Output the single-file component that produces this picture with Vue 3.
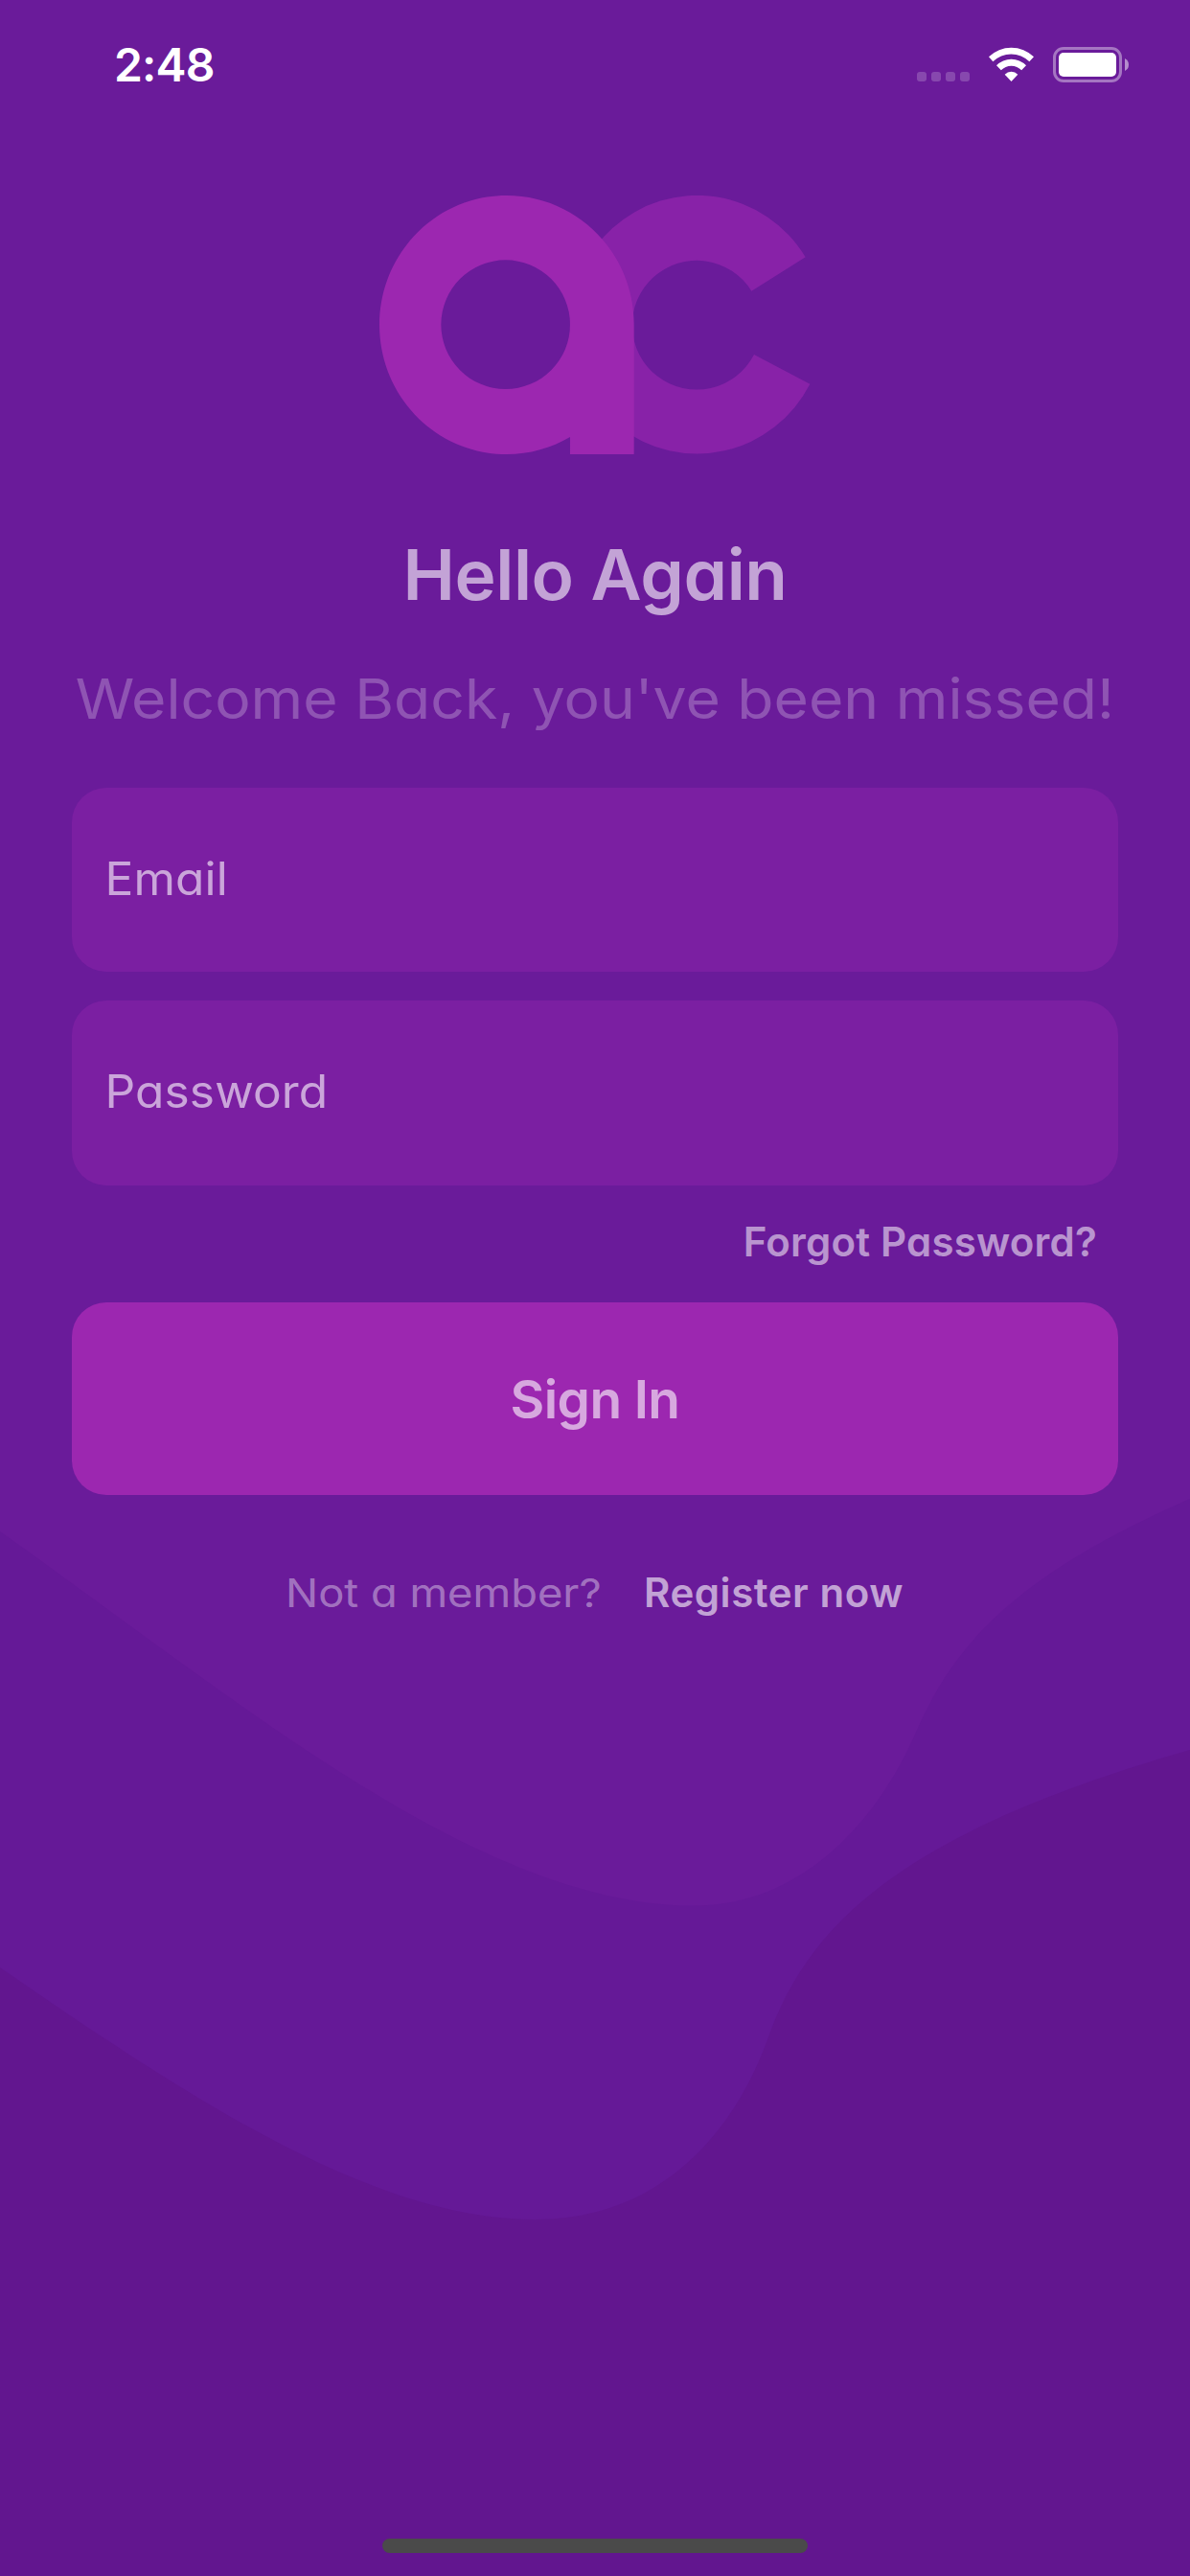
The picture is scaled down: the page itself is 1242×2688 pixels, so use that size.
<script setup>
import { ref } from 'vue'

const email = ref('')
const password = ref('')
</script>

<template>
  <main class="screen">
    <svg class="waves" viewBox="0 0 1242 2688" aria-hidden="true">
      <path
        fill="#651997"
        d="M0 1598C250 1775 500 1988.6 725 1988.6C830 1988.6 910 1910 954 1812C990 1728 1045 1650 1242 1564V2688H0Z"
      />
      <path
        fill="#62168f"
        d="M0 2053C200 2191 390 2316 558 2316C690 2316 765 2225 800 2131C840 2015 930 1915 1242 1826V2688H0Z"
      />
    </svg>

    <header class="status">
      <span class="time">2:48</span>
      <div class="indicators">
        <div class="dots"><i v-for="n in 4" :key="n"></i></div>
        <svg class="wifi" viewBox="336 87 141 108" aria-hidden="true">
          <g fill="#fff">
            <path d="M336 118A101 101 0 0 1 477 118L463 133A80 80 0 0 0 349 133Z" />
            <path d="M360 145A65 65 0 0 1 453 145L438.500 160A44 44 0 0 0 374.500 160Z" />
            <path d="M386 173A29 29 0 0 1 427 173L406.500 195Z" />
          </g>
        </svg>
        <div class="battery">
          <div class="case"><div class="charge"></div></div>
          <svg class="nub" viewBox="0 0 4 13" aria-hidden="true">
            <path fill="#fff" fill-opacity=".5" d="M0 0Q4 2 4 6.500T0 13Z" />
          </svg>
        </div>
      </div>
    </header>

    <svg class="logo" viewBox="48 42 1349 810" aria-hidden="true">
      <path
        fill="#8822a8"
        d="M1382 235A398 404.500 0 1 0 1396 632L1221 540A202 202 0 1 1 1213 341Z"
      />
      <path
        fill="#9c27b0"
        fill-rule="evenodd"
        d="M446 42C668 42 845 223 845 446V852H645V798C586 833 518 852 446 852C225 852 48 670 48 447S225 42 446 42ZM443 244A202 202 0 1 0 443 648A202 202 0 1 0 443 244Z"
      />
    </svg>

    <h1>Hello Again</h1>
    <p class="welcome">Welcome Back, you've been missed!</p>

    <form class="form" @submit.prevent>
      <label class="field"><input v-model="email" type="text" placeholder="Email" /></label>
      <label class="field"><input v-model="password" type="password" placeholder="Password" /></label>
      <a class="forgot">Forgot Password?</a>
      <button type="submit">Sign In</button>
    </form>

    <p class="register">
      <span class="ask">Not a member?</span>
      <a class="join">Register now</a>
    </p>

    <div class="home-bar"></div>
  </main>
</template>

<style>
body {
  margin: 0;
  background: #6a1b9a;
}
</style>

<style scoped>
.screen {
  position: relative;
  display: flex;
  flex-direction: column;
  align-items: center;
  box-sizing: border-box;
  width: 1242px;
  height: 2688px;
  overflow: hidden;
  background: #6a1b9a;
  font-family: Inter, "Noto Sans", sans-serif;
  font-feature-settings: 'cv11';
  color: #fff;
}

.screen > * {
  position: relative;
  flex-shrink: 0;
}

.screen > .waves {
  position: absolute;
  inset: 0;
  width: 100%;
  height: 100%;
}

.status {
  display: flex;
  justify-content: space-between;
  box-sizing: border-box;
  width: 100%;
  height: 204px;
  padding: 38px 64px 0 119px;
}

.time {
  height: 60px;
  font-size: 48px;
  font-weight: 560;
  line-height: 60px;
  letter-spacing: -0.8px;
}

.indicators {
  display: flex;
  align-items: flex-end;
  height: 48px;
}

.dots {
  display: flex;
  gap: 5px;
  margin: 0 20px 1px 0;
}

.dots i {
  width: 10px;
  height: 10px;
  border-radius: 3px;
  background: rgba(255, 255, 255, 0.2);
}

.wifi {
  width: 47px;
  height: 36px;
  margin: 0 20px 1px 0;
}

.battery {
  display: flex;
  align-items: center;
  gap: 3px;
}

.case {
  box-sizing: border-box;
  width: 72px;
  height: 37px;
  padding: 3px;
  border: 3px solid rgba(255, 255, 255, 0.4);
  border-radius: 11px;
}

.charge {
  height: 100%;
  border-radius: 5px;
  background: #fff;
}

.nub {
  width: 4px;
  height: 13px;
}

.logo {
  width: 449.7px;
  height: 270px;
}

h1 {
  margin: 70px 0 0;
  color: rgba(255, 255, 255, 0.6);
  font-size: 73px;
  font-weight: 600;
  line-height: 111px;
  letter-spacing: -0.4px;
}

.welcome {
  margin: 29px 0 48px;
  color: rgba(255, 255, 255, 0.25);
  font-size: 58px;
  line-height: 90px;
  white-space: nowrap;
  transform: scaleX(1.076);
}

.form {
  display: flex;
  flex-direction: column;
  width: 1092px;
}

.field {
  display: block;
  height: 192.4px;
  margin-bottom: 29.8px;
  overflow: hidden;
  border-radius: 36px;
  background: #7b1fa2;
}

input {
  box-sizing: border-box;
  width: 96%;
  height: 100%;
  padding: 0 33px 4px;
  border: 0;
  outline: 0;
  background: transparent;
  color: #fff;
  font: inherit;
  font-feature-settings: inherit;
  font-size: 47.5px;
  letter-spacing: 0.1px;
  transform: scaleX(1.045);
  transform-origin: left;
}

input::placeholder {
  color: rgba(255, 255, 255, 0.6);
  opacity: 1;
}

.forgot {
  align-self: flex-end;
  margin: 0 22px 33px 0;
  color: rgba(255, 255, 255, 0.55);
  font-size: 42px;
  font-weight: 600;
  line-height: 60px;
  letter-spacing: 0.2px;
}

button {
  height: 201px;
  padding: 0;
  border: 0;
  border-radius: 36px;
  background: #9c27b0;
  color: rgba(255, 255, 255, 0.6);
  font: inherit;
  font-feature-settings: inherit;
  font-size: 55px;
  font-weight: 600;
  letter-spacing: -0.6px;
}

.register {
  display: flex;
  gap: 43px;
  margin: 71.5px 1px 0 0;
  font-size: 42px;
  line-height: 60px;
}

.ask {
  width: 331px;
  color: rgba(255, 255, 255, 0.4);
  font-size: 41.5px;
  white-space: nowrap;
  transform: scaleX(1.092);
  transform-origin: left;
}

.join {
  color: rgba(255, 255, 255, 0.6);
  font-weight: 600;
  letter-spacing: 0.55px;
}

.home-bar {
  width: 444px;
  height: 15px;
  margin: auto 0 24px;
  border-radius: 8px;
  background: #4a4a4a;
}
</style>
